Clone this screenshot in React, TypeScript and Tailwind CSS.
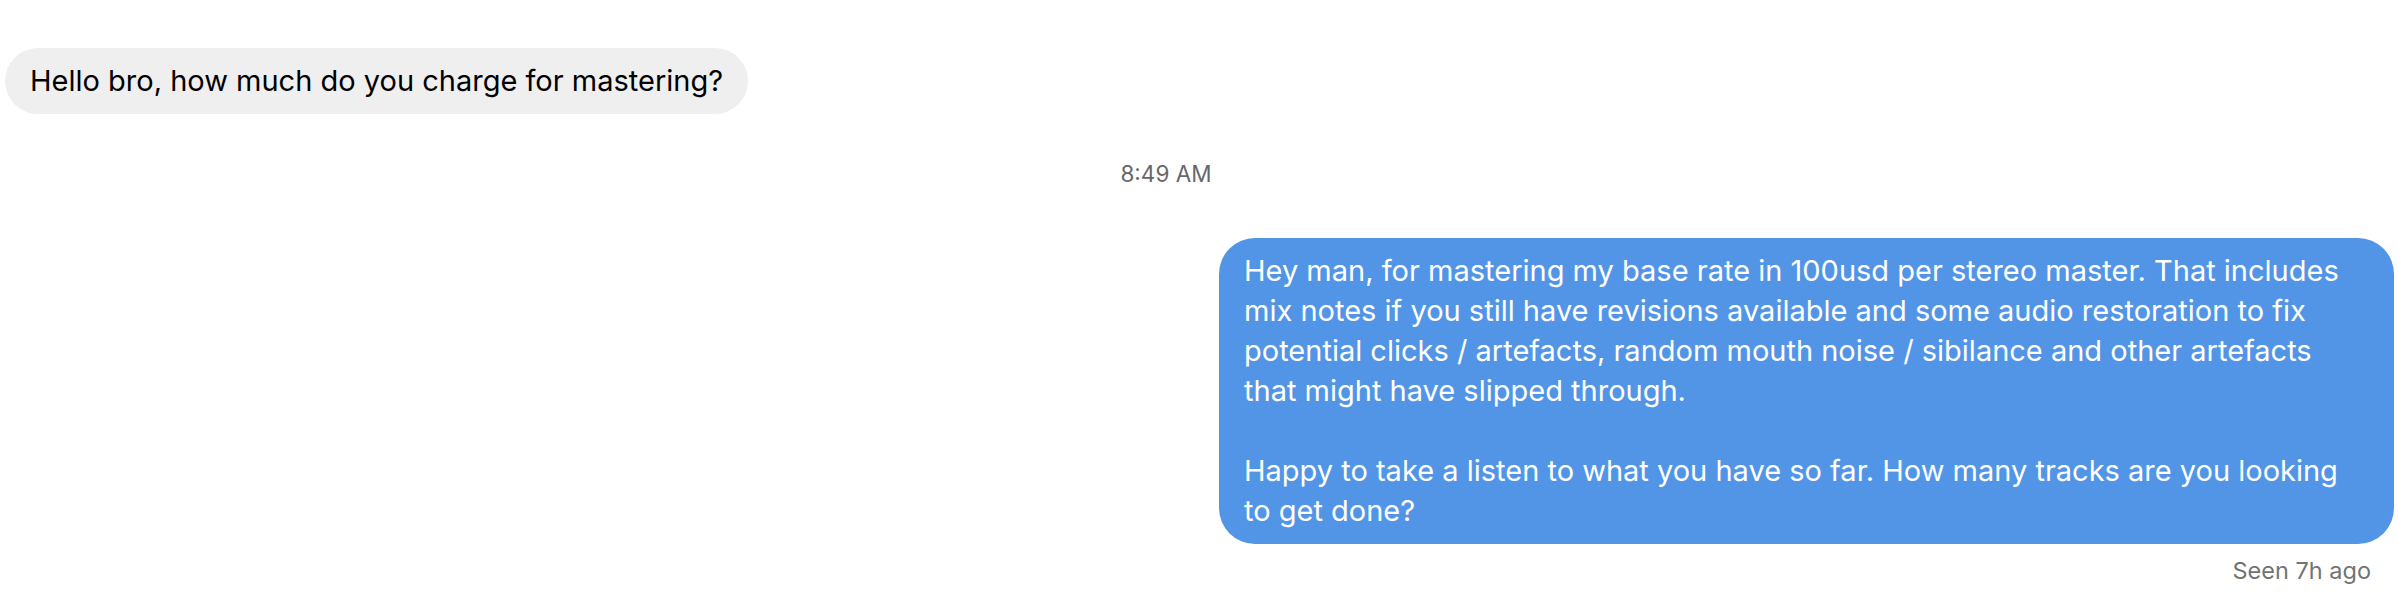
const font = { fontFamily: 'Inter, "Liberation Sans", sans-serif' }

const reply = [
  'Hey man, for mastering my base rate in 100usd per stereo master. That includes',
  'mix notes if you still have revisions available and some audio restoration to fix',
  'potential clicks / artefacts, random mouth noise / sibilance and other artefacts',
  'that might have slipped through.',
]

const reply2 = [
  'Happy to take a listen to what you have so far. How many tracks are you looking',
  'to get done?',
]

export default function App() {
  return (
    <div className="min-h-[600px] w-full bg-white" style={font}>
      <div className="flex flex-col">
        <div className="flex pl-[5px] pt-[48px]">
          <div className="rounded-full bg-[#efefef] px-[25px] py-[13px] text-[29px] leading-[40px] text-black">
            Hello bro, how much do you charge for mastering?
          </div>
        </div>

        <div className="mt-[46px] flex justify-center pr-[66px]">
          <span className="text-[22.5px] leading-[28px] text-[#65676b]">8:49 AM</span>
        </div>

        <div className="mt-[50px] flex justify-end pr-[4px]">
          <div className="w-[1175px] rounded-[36px] bg-[#5295e7] px-[25px] py-[13px] text-[29px] leading-[40px] text-white">
            <p>
              {reply.map((l) => (
                <span key={l} className="block whitespace-nowrap">
                  {l}
                </span>
              ))}
            </p>
            <p className="mt-[40px]">
              {reply2.map((l) => (
                <span key={l} className="block whitespace-nowrap">
                  {l}
                </span>
              ))}
            </p>
          </div>
        </div>

        <div className="flex justify-end pr-[27px] pt-[12px]">
          <span className="text-[23.5px] leading-[30px] text-[#737373]">Seen 7h ago</span>
        </div>
      </div>
    </div>
  )
}
